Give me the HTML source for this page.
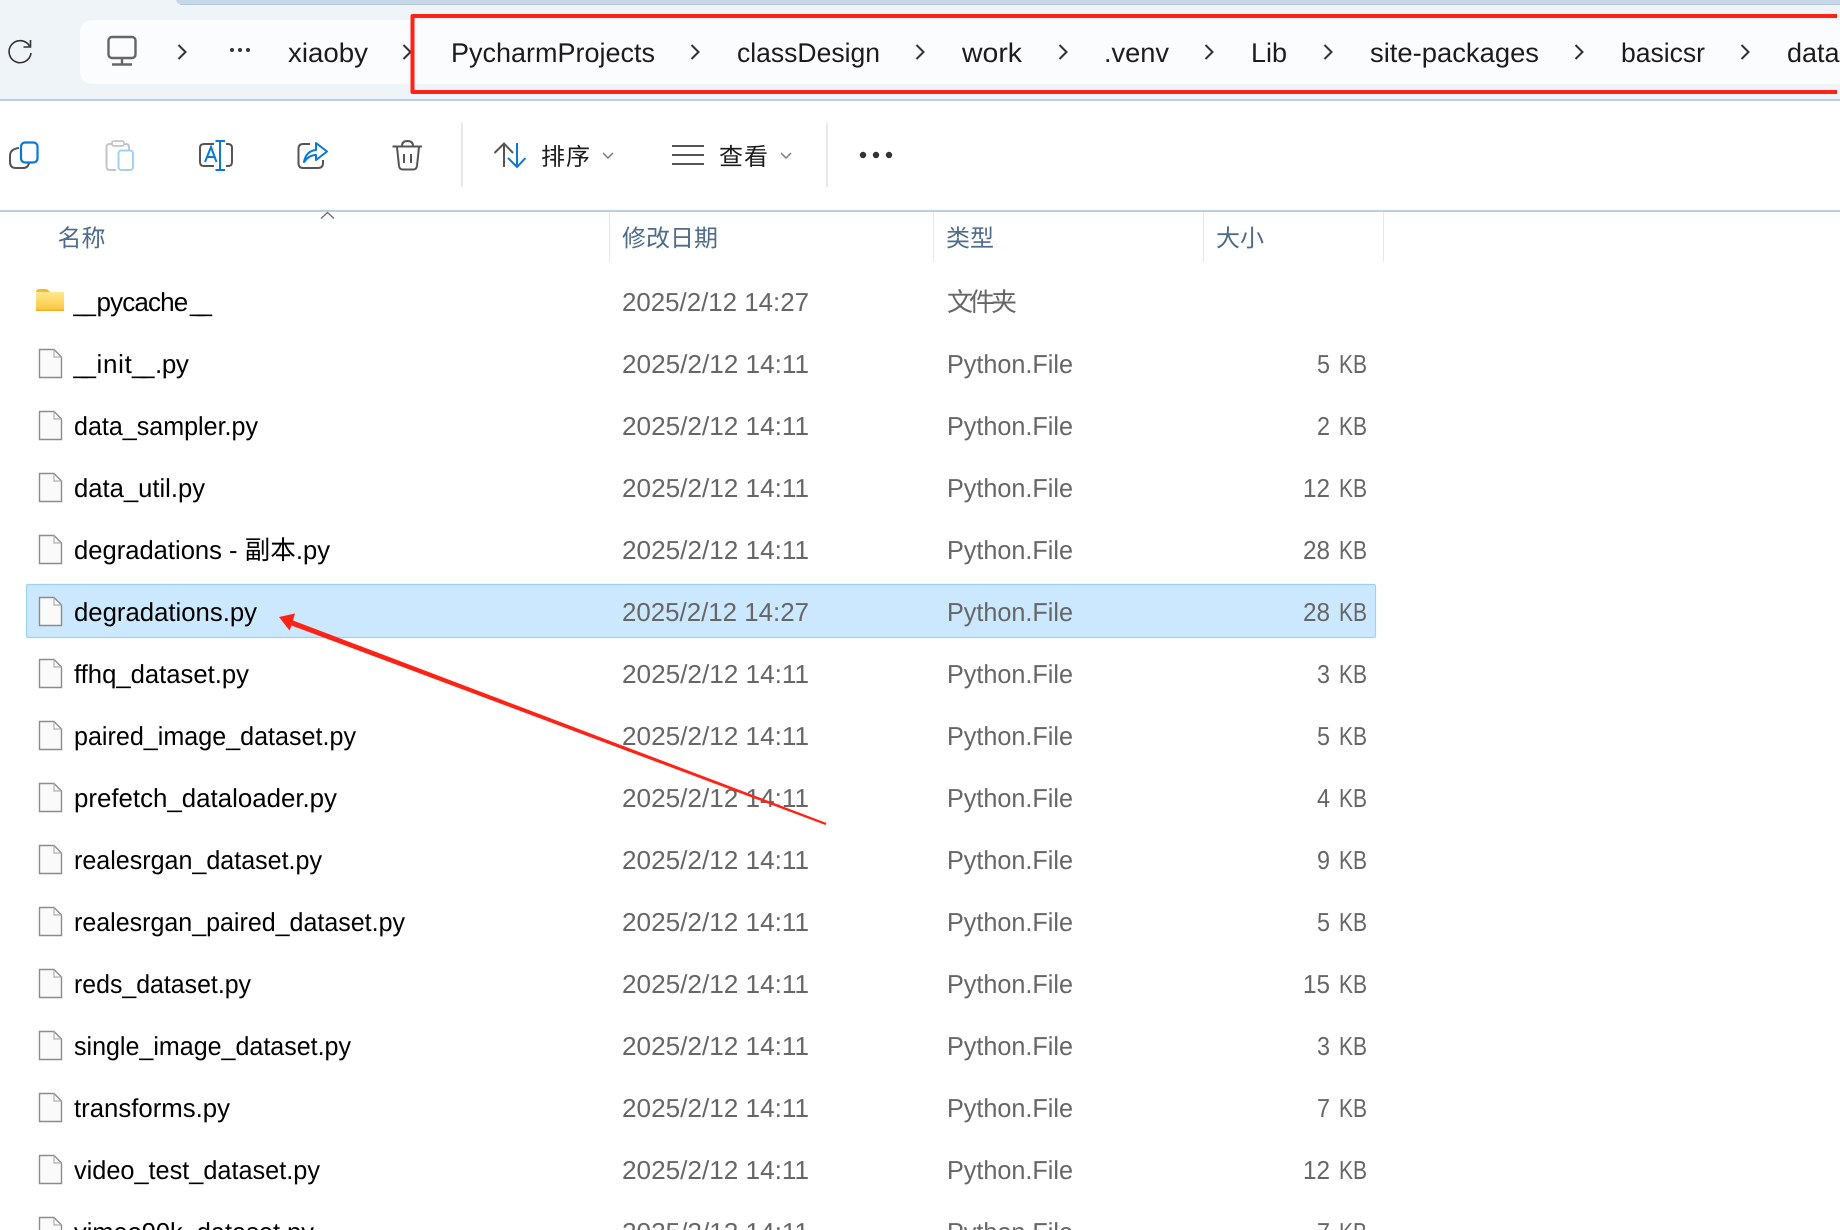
<!DOCTYPE html>
<html lang="zh">
<head>
<meta charset="utf-8">
<title>File Explorer</title>
<style>
html,body{margin:0;padding:0;width:1840px;height:1230px;overflow:hidden;background:#fff}
svg{display:block}
text{font-family:"Liberation Sans","Noto Sans CJK SC",sans-serif;text-rendering:geometricPrecision}
.bc{font-size:27px;fill:#1c1c1c}
.tb{font-size:24px;fill:#1c1c1c}
.hd{font-size:24px;fill:#4f6c8c}
.n{font-size:26px;fill:#000}
.d{font-size:26px;fill:#666}
.chev{fill:none;stroke:#333;stroke-width:2}
</style>
</head>
<body>
<svg xmlns="http://www.w3.org/2000/svg" width="1840" height="1230" viewBox="0 0 1840 1230">
<defs>
<linearGradient id="fg" x1="0" y1="0" x2="0" y2="1"><stop offset="0" stop-color="#ffe88f"/><stop offset="1" stop-color="#fcc63c"/></linearGradient>
<g id="file"><path d="M39.5 -23.5H54L61.5 -16V4.5H39.5Z" fill="#fafafa" stroke="#8c8c8c" stroke-width="1.4"/><path d="M54 -23.5V-16H61.5" fill="none" stroke="#b0b0b0" stroke-width="1.2"/></g>
<path id="cv" d="M-3.5 -7L3.5 0L-3.5 7" class="chev"/>
</defs>

<!-- top bar -->
<rect x="0" y="0" width="1840" height="99" fill="#eff4f9"/>
<path d="M176 0H1840V5H184Q177 5 176 0Z" fill="#c7d9e8"/>
<rect x="180" y="4" width="1660" height="1" fill="#b6c8d8"/>
<path d="M94 20H1840V84H94Q80 84 80 70V34Q80 20 94 20Z" fill="#fbfcfe"/>
<rect x="0" y="99" width="1840" height="2" fill="#bccddb"/>

<!-- refresh -->
<path d="M29.5 46A11 11 0 1 0 31 53" fill="none" stroke="#333" stroke-width="1.6"/>
<path d="M30.5 40V47H23.5" fill="none" stroke="#333" stroke-width="1.6"/>
<!-- monitor -->
<rect x="108.5" y="37" width="27" height="21" rx="3.5" fill="none" stroke="#666" stroke-width="2.4"/>
<path d="M122 58V64M112 64.5H132" fill="none" stroke="#666" stroke-width="2.4"/>
<use href="#cv" x="182" y="52"/>
<circle cx="232" cy="50" r="2" fill="#333"/><circle cx="240" cy="50" r="2" fill="#333"/><circle cx="248" cy="50" r="2" fill="#333"/>
<text class="bc" x="288" y="62" textLength="80" lengthAdjust="spacingAndGlyphs">xiaoby</text>
<use href="#cv" x="407" y="52"/>
<text class="bc" x="451" y="62" textLength="204" lengthAdjust="spacingAndGlyphs">PycharmProjects</text>
<use href="#cv" x="695" y="52"/>
<text class="bc" x="737" y="62" textLength="143" lengthAdjust="spacingAndGlyphs">classDesign</text>
<use href="#cv" x="920" y="52"/>
<text class="bc" x="962" y="62" textLength="60" lengthAdjust="spacingAndGlyphs">work</text>
<use href="#cv" x="1063" y="52"/>
<text class="bc" x="1104" y="62" textLength="65" lengthAdjust="spacingAndGlyphs">.venv</text>
<use href="#cv" x="1209" y="52"/>
<text class="bc" x="1251" y="62" textLength="36" lengthAdjust="spacingAndGlyphs">Lib</text>
<use href="#cv" x="1328" y="52"/>
<text class="bc" x="1370" y="62" textLength="169" lengthAdjust="spacingAndGlyphs">site-packages</text>
<use href="#cv" x="1579" y="52"/>
<text class="bc" x="1621" y="62" textLength="84" lengthAdjust="spacingAndGlyphs">basicsr</text>
<use href="#cv" x="1745" y="52"/>
<text class="bc" x="1787" y="62">data</text>

<!-- red highlight -->
<path d="M1837 16H412.500V92H1837" fill="none" stroke="#ff2216" stroke-width="4" stroke-linejoin="round"/>

<!-- toolbar -->
<path d="M19 148Q10 149 10 156V162Q10 168 16 168H23Q28 168 29 163" fill="none" stroke="#555" stroke-width="2"/>
<rect x="21" y="142.5" width="16.5" height="20" rx="4" fill="none" stroke="#0a78d4" stroke-width="2.2"/>

<path d="M116 170H110Q106.500 170 106.500 166V147Q106.500 144 110 144H126Q129 144 129 147V150" fill="none" stroke="#c4c4c4" stroke-width="2"/>
<rect x="112" y="141" width="12" height="5" rx="2" fill="#fff" stroke="#c4c4c4" stroke-width="1.8"/>
<rect x="118.500" y="150.500" width="14.500" height="19.500" rx="3" fill="none" stroke="#a6d0f2" stroke-width="2"/>

<path d="M214 144H204Q200 144 200 148V162Q200 166 204 166H214M226 144H228Q232 144 232 148V162Q232 166 228 166H226" fill="none" stroke="#555" stroke-width="2"/>
<path d="M220 141V170M215.500 141H225M215.500 170H225" fill="none" stroke="#0a78d4" stroke-width="2"/>
<path d="M205 162L211 147L216.500 162M207 157H215" fill="none" stroke="#0a78d4" stroke-width="2"/>

<path d="M310 144H303Q298.500 144 298.500 149V163Q298.500 168 303 168H318Q323 168 323 163V160" fill="none" stroke="#555" stroke-width="2"/>
<path d="M304 162Q306 151 316 150V143L327 151.500L316 160V155Q309 155 304 162Z" fill="none" stroke="#0a78d4" stroke-width="2" stroke-linejoin="round"/>

<path d="M392.500 146.500H422M397 147L399 166Q399.500 169.500 403 169.500H413Q416.500 169.500 417 166L419 147M402 146Q402 141 407.500 141Q413 141 413 146M404 154V163M411 154V163" fill="none" stroke="#555" stroke-width="2"/>

<rect x="461" y="123" width="2" height="64" fill="#e8e8e8"/>

<path d="M504 167V144M494.500 153L504 143.500L513 153" fill="none" stroke="#555" stroke-width="2"/>
<path d="M517 143V167M508 158L517 167L525.500 158" fill="none" stroke="#0a78d4" stroke-width="2"/>
<text class="tb" x="541" y="165" textLength="49" lengthAdjust="spacing">排序</text>
<path d="M603 153L608 158L613 153" fill="none" stroke="#777" stroke-width="1.4"/>

<path d="M672 146H704M672 155H704M672 164H704" fill="none" stroke="#555" stroke-width="2"/>
<text class="tb" x="719" y="165" textLength="49" lengthAdjust="spacing">查看</text>
<path d="M781 153L786 158L791 153" fill="none" stroke="#777" stroke-width="1.4"/>
<rect x="826" y="123" width="2" height="64" fill="#e8e8e8"/>
<circle cx="863" cy="155" r="3.200" fill="#333"/><circle cx="876" cy="155" r="3.200" fill="#333"/><circle cx="889" cy="155" r="3.200" fill="#333"/>

<rect x="0" y="210" width="1840" height="2" fill="#bccddb"/>

<!-- header -->
<path d="M321 218.500L327.500 212.500L334 218.500" fill="none" stroke="#666" stroke-width="1.2"/>
<rect x="609" y="212" width="1" height="50" fill="#e8e8e8"/>
<rect x="933" y="212" width="1" height="50" fill="#e8e8e8"/>
<rect x="1203" y="212" width="1" height="50" fill="#e8e8e8"/>
<rect x="1383" y="212" width="1" height="50" fill="#e8e8e8"/>
<text class="hd" x="57.500" y="246.500" textLength="48" lengthAdjust="spacing">名称</text>
<text class="hd" x="622" y="246.500" textLength="96" lengthAdjust="spacing">修改日期</text>
<text class="hd" x="946" y="246.500" textLength="48" lengthAdjust="spacing">类型</text>
<text class="hd" x="1216" y="246.500" textLength="48" lengthAdjust="spacing">大小</text>

<!-- selected row -->
<rect x="26.500" y="584.500" width="1349" height="53" rx="1.500" fill="#cce8ff" stroke="#99d1ff" stroke-width="1.2"/>

<!-- folder -->
<path d="M36 293Q36 289 39 289H46Q48 289 50 292H36Z" fill="#fbb829"/>
<rect x="36" y="292" width="28" height="19" rx="1" fill="url(#fg)"/>
<rect x="36" y="309.500" width="28" height="1.500" fill="#f2b02a"/>

<!-- rows -->
<text class="n" y="311" x="73.500 81.500 96.500" style="letter-spacing:-.85px">__pycache<tspan x="190 197.500">__</tspan></text>
<text class="d" x="622" y="311" textLength="187" lengthAdjust="spacingAndGlyphs">2025/2/12 14:27</text>
<text class="d" x="947" y="311" textLength="70" lengthAdjust="spacing">文件夹</text>

<use href="#file" y="373"/>
<text class="n" y="373" x="73.500 81.500 96.500" style="letter-spacing:.7px">__init<tspan x="132 140 155" style="letter-spacing:-.4px">__.py</tspan></text>
<text class="d" x="622" y="373" textLength="187" lengthAdjust="spacingAndGlyphs">2025/2/12 14:11</text>
<text class="d" x="947" y="373" textLength="126" lengthAdjust="spacingAndGlyphs">Python.File</text>
<text class="d" x="1317" y="373" textLength="13" lengthAdjust="spacingAndGlyphs">5</text><text class="d" x="1339" y="373" textLength="28" lengthAdjust="spacingAndGlyphs">KB</text>

<use href="#file" y="435"/>
<text class="n" x="74" y="435" textLength="184" lengthAdjust="spacingAndGlyphs">data_sampler.py</text>
<text class="d" x="622" y="435" textLength="187" lengthAdjust="spacingAndGlyphs">2025/2/12 14:11</text>
<text class="d" x="947" y="435" textLength="126" lengthAdjust="spacingAndGlyphs">Python.File</text>
<text class="d" x="1317" y="435" textLength="13" lengthAdjust="spacingAndGlyphs">2</text><text class="d" x="1339" y="435" textLength="28" lengthAdjust="spacingAndGlyphs">KB</text>

<use href="#file" y="497"/>
<text class="n" x="74" y="497" textLength="131" lengthAdjust="spacingAndGlyphs">data_util.py</text>
<text class="d" x="622" y="497" textLength="187" lengthAdjust="spacingAndGlyphs">2025/2/12 14:11</text>
<text class="d" x="947" y="497" textLength="126" lengthAdjust="spacingAndGlyphs">Python.File</text>
<text class="d" x="1303" y="497" textLength="27" lengthAdjust="spacingAndGlyphs">12</text><text class="d" x="1339" y="497" textLength="28" lengthAdjust="spacingAndGlyphs">KB</text>

<use href="#file" y="559"/>
<text class="n" x="74" y="559" textLength="256" lengthAdjust="spacingAndGlyphs">degradations - 副本.py</text>
<text class="d" x="622" y="559" textLength="187" lengthAdjust="spacingAndGlyphs">2025/2/12 14:11</text>
<text class="d" x="947" y="559" textLength="126" lengthAdjust="spacingAndGlyphs">Python.File</text>
<text class="d" x="1303" y="559" textLength="27" lengthAdjust="spacingAndGlyphs">28</text><text class="d" x="1339" y="559" textLength="28" lengthAdjust="spacingAndGlyphs">KB</text>

<use href="#file" y="621"/>
<text class="n" x="74" y="621" textLength="183" lengthAdjust="spacingAndGlyphs">degradations.py</text>
<text class="d" x="622" y="621" textLength="187" lengthAdjust="spacingAndGlyphs">2025/2/12 14:27</text>
<text class="d" x="947" y="621" textLength="126" lengthAdjust="spacingAndGlyphs">Python.File</text>
<text class="d" x="1303" y="621" textLength="27" lengthAdjust="spacingAndGlyphs">28</text><text class="d" x="1339" y="621" textLength="28" lengthAdjust="spacingAndGlyphs">KB</text>

<use href="#file" y="683"/>
<text class="n" x="74" y="683" textLength="175" lengthAdjust="spacingAndGlyphs">ffhq_dataset.py</text>
<text class="d" x="622" y="683" textLength="187" lengthAdjust="spacingAndGlyphs">2025/2/12 14:11</text>
<text class="d" x="947" y="683" textLength="126" lengthAdjust="spacingAndGlyphs">Python.File</text>
<text class="d" x="1317" y="683" textLength="13" lengthAdjust="spacingAndGlyphs">3</text><text class="d" x="1339" y="683" textLength="28" lengthAdjust="spacingAndGlyphs">KB</text>

<use href="#file" y="745"/>
<text class="n" x="74" y="745" textLength="282" lengthAdjust="spacingAndGlyphs">paired_image_dataset.py</text>
<text class="d" x="622" y="745" textLength="187" lengthAdjust="spacingAndGlyphs">2025/2/12 14:11</text>
<text class="d" x="947" y="745" textLength="126" lengthAdjust="spacingAndGlyphs">Python.File</text>
<text class="d" x="1317" y="745" textLength="13" lengthAdjust="spacingAndGlyphs">5</text><text class="d" x="1339" y="745" textLength="28" lengthAdjust="spacingAndGlyphs">KB</text>

<use href="#file" y="807"/>
<text class="n" x="74" y="807" textLength="263" lengthAdjust="spacingAndGlyphs">prefetch_dataloader.py</text>
<text class="d" x="622" y="807" textLength="187" lengthAdjust="spacingAndGlyphs">2025/2/12 14:11</text>
<text class="d" x="947" y="807" textLength="126" lengthAdjust="spacingAndGlyphs">Python.File</text>
<text class="d" x="1317" y="807" textLength="13" lengthAdjust="spacingAndGlyphs">4</text><text class="d" x="1339" y="807" textLength="28" lengthAdjust="spacingAndGlyphs">KB</text>

<use href="#file" y="869"/>
<text class="n" x="74" y="869" textLength="248" lengthAdjust="spacingAndGlyphs">realesrgan_dataset.py</text>
<text class="d" x="622" y="869" textLength="187" lengthAdjust="spacingAndGlyphs">2025/2/12 14:11</text>
<text class="d" x="947" y="869" textLength="126" lengthAdjust="spacingAndGlyphs">Python.File</text>
<text class="d" x="1317" y="869" textLength="13" lengthAdjust="spacingAndGlyphs">9</text><text class="d" x="1339" y="869" textLength="28" lengthAdjust="spacingAndGlyphs">KB</text>

<use href="#file" y="931"/>
<text class="n" x="74" y="931" textLength="331" lengthAdjust="spacingAndGlyphs">realesrgan_paired_dataset.py</text>
<text class="d" x="622" y="931" textLength="187" lengthAdjust="spacingAndGlyphs">2025/2/12 14:11</text>
<text class="d" x="947" y="931" textLength="126" lengthAdjust="spacingAndGlyphs">Python.File</text>
<text class="d" x="1317" y="931" textLength="13" lengthAdjust="spacingAndGlyphs">5</text><text class="d" x="1339" y="931" textLength="28" lengthAdjust="spacingAndGlyphs">KB</text>

<use href="#file" y="993"/>
<text class="n" x="74" y="993" textLength="177" lengthAdjust="spacingAndGlyphs">reds_dataset.py</text>
<text class="d" x="622" y="993" textLength="187" lengthAdjust="spacingAndGlyphs">2025/2/12 14:11</text>
<text class="d" x="947" y="993" textLength="126" lengthAdjust="spacingAndGlyphs">Python.File</text>
<text class="d" x="1303" y="993" textLength="27" lengthAdjust="spacingAndGlyphs">15</text><text class="d" x="1339" y="993" textLength="28" lengthAdjust="spacingAndGlyphs">KB</text>

<use href="#file" y="1055"/>
<text class="n" x="74" y="1055" textLength="277" lengthAdjust="spacingAndGlyphs">single_image_dataset.py</text>
<text class="d" x="622" y="1055" textLength="187" lengthAdjust="spacingAndGlyphs">2025/2/12 14:11</text>
<text class="d" x="947" y="1055" textLength="126" lengthAdjust="spacingAndGlyphs">Python.File</text>
<text class="d" x="1317" y="1055" textLength="13" lengthAdjust="spacingAndGlyphs">3</text><text class="d" x="1339" y="1055" textLength="28" lengthAdjust="spacingAndGlyphs">KB</text>

<use href="#file" y="1117"/>
<text class="n" x="74" y="1117" textLength="156" lengthAdjust="spacingAndGlyphs">transforms.py</text>
<text class="d" x="622" y="1117" textLength="187" lengthAdjust="spacingAndGlyphs">2025/2/12 14:11</text>
<text class="d" x="947" y="1117" textLength="126" lengthAdjust="spacingAndGlyphs">Python.File</text>
<text class="d" x="1317" y="1117" textLength="13" lengthAdjust="spacingAndGlyphs">7</text><text class="d" x="1339" y="1117" textLength="28" lengthAdjust="spacingAndGlyphs">KB</text>

<use href="#file" y="1179"/>
<text class="n" x="74" y="1179" textLength="246" lengthAdjust="spacingAndGlyphs">video_test_dataset.py</text>
<text class="d" x="622" y="1179" textLength="187" lengthAdjust="spacingAndGlyphs">2025/2/12 14:11</text>
<text class="d" x="947" y="1179" textLength="126" lengthAdjust="spacingAndGlyphs">Python.File</text>
<text class="d" x="1303" y="1179" textLength="27" lengthAdjust="spacingAndGlyphs">12</text><text class="d" x="1339" y="1179" textLength="28" lengthAdjust="spacingAndGlyphs">KB</text>

<use href="#file" y="1241"/>
<text class="n" x="74" y="1241" textLength="240" lengthAdjust="spacingAndGlyphs">vimeo90k_dataset.py</text>
<text class="d" x="622" y="1241" textLength="187" lengthAdjust="spacingAndGlyphs">2025/2/12 14:11</text>
<text class="d" x="947" y="1241" textLength="126" lengthAdjust="spacingAndGlyphs">Python.File</text>
<text class="d" x="1317" y="1241" textLength="13" lengthAdjust="spacingAndGlyphs">7</text><text class="d" x="1339" y="1241" textLength="28" lengthAdjust="spacingAndGlyphs">KB</text>

<!-- red arrow -->
<path d="M279 617L295 613.500L293 620.500L826.500 823L825.500 825L291.500 625.500L289.500 630.500Z" fill="#ff2216"/>
</svg>
</body>
</html>
